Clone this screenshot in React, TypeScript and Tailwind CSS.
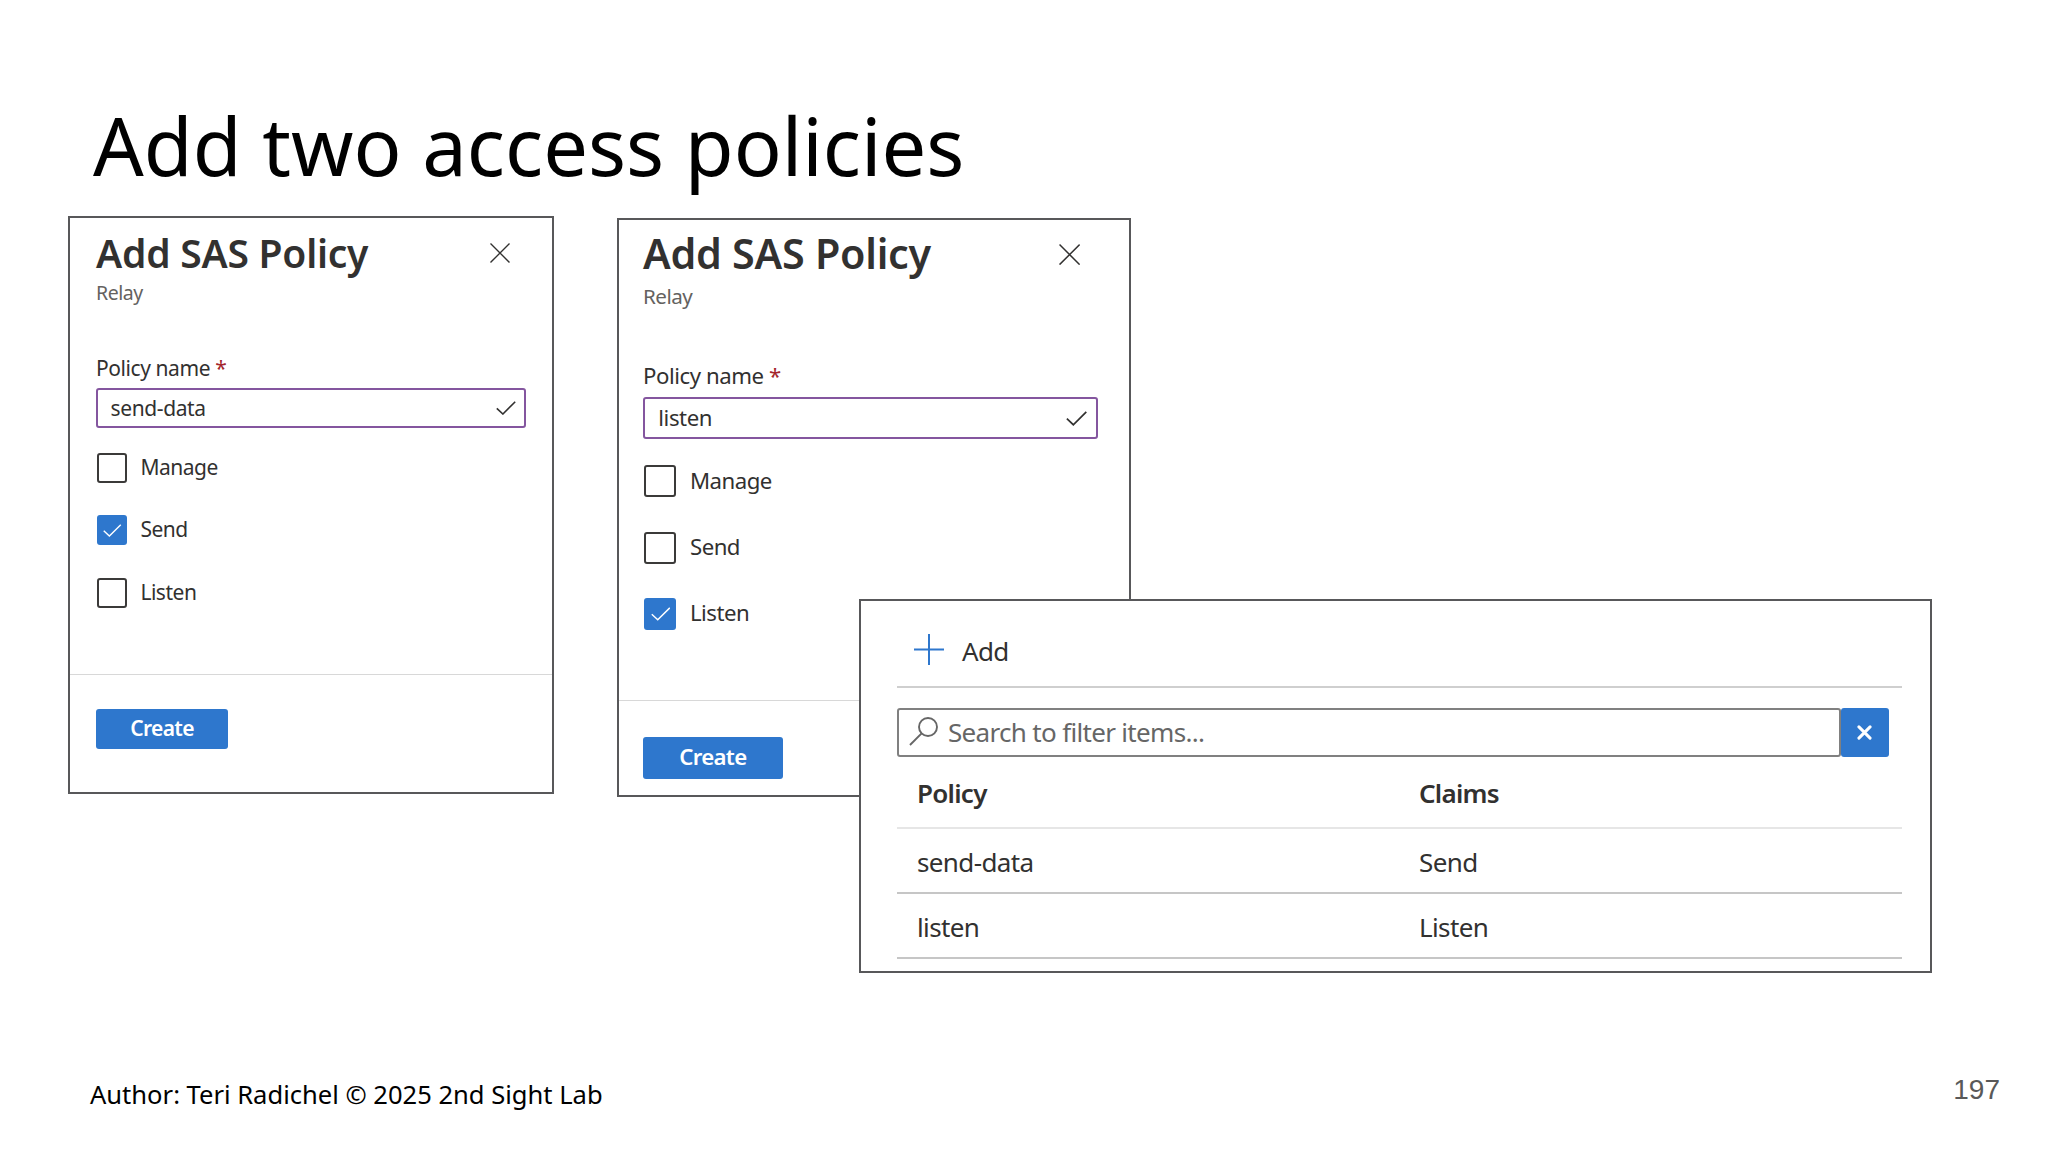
import clsx from "clsx";

interface PolicyPanelProps {
  name: string;
  checked: string;
  className: string;
  bodyClassName: string;
  footerClassName: string;
}

const CLAIMS = ["Manage", "Send", "Listen"];

const POLICIES = [
  { name: "send-data", claims: "Send" },
  { name: "listen", claims: "Listen" },
];

function CheckMark({ className }: { className: string }) {
  return (
    <svg viewBox="0 0 20 14" fill="none" stroke="currentColor" className={className}>
      <path d="M0.8 7.3 L6.9 13 L19.2 0.8" />
    </svg>
  );
}

// Sized in em so that the same form can be shown at two scales.
function PolicyPanel({ name, checked, className, bodyClassName, footerClassName }: PolicyPanelProps) {
  return (
    <section className={clsx("shrink-0 border-2 border-[#58585a] bg-white text-[#323130]", className)}>
      <div className={bodyClassName}>
        <div className="flex h-[4em] w-[41.35em] items-center justify-between">
          <h2 className="whitespace-nowrap">
            <span className="text-[3.9em] leading-none font-semibold tracking-[-0.006em]">Add SAS Policy</span>
          </h2>
          <svg viewBox="0 0 20 20" fill="none" stroke="currentColor" strokeWidth="1.4" className="mt-[0.25em] h-[2em] w-[2em]">
            <path d="M0.5 0.5 L19.5 19.5 M19.5 0.5 L0.5 19.5" />
          </svg>
        </div>
        <div className="mt-[0.85em] flex h-[2.4em] items-center text-[#646260]">
          <span className="text-[1.95em] leading-none tracking-[-0.025em]">Relay</span>
        </div>
        <div className="mt-[5.15em] flex h-[2.4em] items-center">
          <span className="text-[2.1em] leading-none tracking-[-0.02em]">
            Policy name <span className="text-[#a4262c]">*</span>
          </span>
        </div>
        <div className="mt-[0.83em] flex h-[3.95em] w-[43em] items-center justify-between rounded-[3px] border-2 border-[#84569f] pr-[0.85em] pl-[1.25em]">
          <span className="text-[2.1em] leading-none tracking-[-0.018em]">{name}</span>
          <CheckMark className="h-[1.4em] w-[2em] stroke-[1.6]" />
        </div>
        <div className="mt-[2.48em] ml-[0.14em] flex flex-col gap-[3.28em]">
          {CLAIMS.map((claim) => (
            <div key={claim} className="flex h-[3em] items-center gap-[1.3em]">
              <div
                className={clsx(
                  "flex h-[3em] w-[3em] items-center justify-center rounded-[3px]",
                  claim === checked ? "bg-[#2e77cd] text-white" : "border-2 border-[#3b3a39]"
                )}
              >
                {claim === checked && <CheckMark className="h-[1.3em] w-[1.85em] stroke-[1.5]" />}
              </div>
              <span className="pb-[0.05em] text-[2.1em] leading-none tracking-[-0.023em]">{claim}</span>
            </div>
          ))}
        </div>
      </div>
      <div className="mt-[6.62em] h-px bg-[#d8d8d8]" />
      <div className={footerClassName}>
        <button className="mt-[3.38em] flex h-[3.97em] w-[13.2em] items-center justify-center rounded-[3px] bg-[#2e77cd] text-white">
          <span className="pb-[0.06em] text-[2.1em] leading-none font-semibold tracking-[-0.03em]">Create</span>
        </button>
      </div>
    </section>
  );
}

function PolicyTable() {
  return (
    <section className="absolute top-[599px] left-[859px] h-[374px] w-[1073px] border-2 border-[#58585a] bg-white pr-7 pl-9 text-[26px] leading-8 tracking-[-0.024em] text-[#323130]">
      <div className="flex h-[87px] items-center border-b-2 border-[#cfcfcf] pl-[17px]">
        <svg viewBox="0 0 30 31" fill="none" stroke="#2e77cd" strokeWidth="2" className="mt-3 h-[31px] w-[30px]">
          <path d="M15 0 V31 M0 15.5 H30" />
        </svg>
        <span className="mt-[14px] ml-[18px]">Add</span>
      </div>
      <div className="mt-5 flex h-[49px] items-stretch">
        <div className="flex w-[944px] items-center rounded-[3px] border-2 border-[#808080] pl-[10px] text-[#666]">
          <svg viewBox="0 0 30 30" fill="none" stroke="currentColor" strokeWidth="1.9" className="-mt-1 h-[30px] w-[30px]">
            <circle cx="19" cy="11" r="9" />
            <path d="M12.6 17.4 L1 29" />
          </svg>
          <span className="mb-px ml-[9px] tracking-[-0.026em]">Search to filter items...</span>
        </div>
        <button className="flex w-12 items-center justify-center rounded-[3px] bg-[#2e77cd] pr-px">
          <svg viewBox="0 0 14 14" fill="none" stroke="#fff" strokeWidth="2.8" strokeLinecap="round" className="h-[15px] w-[15px]">
            <path d="M1.8 1.8 L12.2 12.2 M12.2 1.8 L1.8 12.2" />
          </svg>
        </button>
      </div>
      <div className="grid h-[72px] grid-cols-[502px_1fr] border-b-2 border-[#e6e6e6] pt-5 pl-5 font-semibold tracking-[-0.028em]">
        <span>Policy</span>
        <span>Claims</span>
      </div>
      {POLICIES.map((p) => (
        <div key={p.name} className="grid h-[65px] grid-cols-[502px_1fr] border-b-2 border-[#c6c6c6] pt-[17px] pl-5">
          <span>{p.name}</span>
          <span>{p.claims}</span>
        </div>
      ))}
    </section>
  );
}

export default function App() {
  return (
    <div className="relative flex h-[1152px] w-[2048px] flex-col overflow-hidden bg-white font-['Noto_Sans',sans-serif]">
      <h1 className="h-[216px] pt-[91px] pl-[93px] text-[79.5px] leading-[109px] text-black">Add two access policies</h1>
      <main className="flex h-[848px] items-start pl-[68px]">
        <PolicyPanel
          name="send-data"
          checked="Send"
          className="h-[578px] w-[486px] text-[10px]"
          bodyClassName="pt-[14px] pl-[26px]"
          footerClassName="pl-[26px]"
        />
        <PolicyPanel
          name="listen"
          checked="Listen"
          className="mt-[2px] ml-[63px] h-[579px] w-[514px] text-[10.58px]"
          bodyClassName="pt-[12px] pl-[24px]"
          footerClassName="pl-[24px]"
        />
      </main>
      <PolicyTable />
      <footer className="flex items-start justify-between pr-[48px] pl-[90px]">
        <span className="pt-[13px] text-[25.55px] leading-[34px] text-black">Author: Teri Radichel © 2025 2nd Sight Lab</span>
        <span className="pt-[10px] font-['Liberation_Sans',sans-serif] text-[28px] leading-8 text-[#595959]">197</span>
      </footer>
    </div>
  );
}
